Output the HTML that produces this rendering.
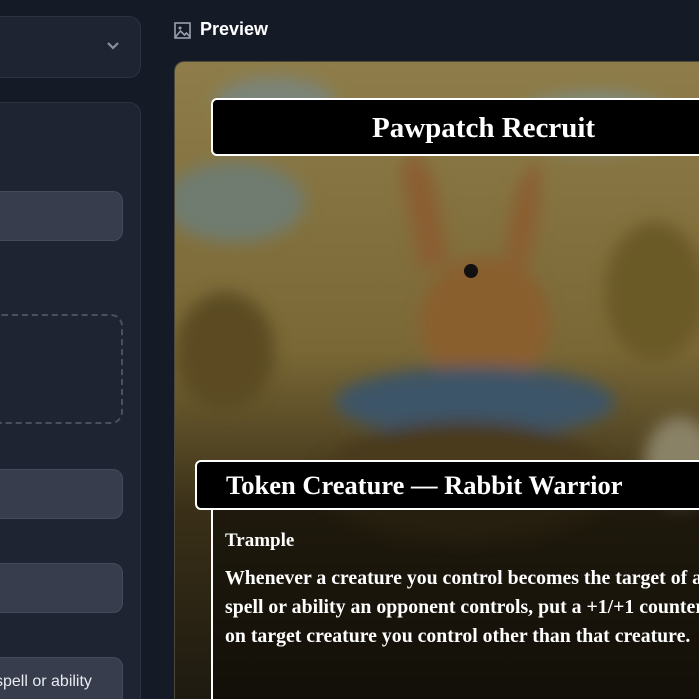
<!DOCTYPE html>
<html><head><style>
html,body{margin:0;width:699px;height:699px;overflow:hidden}
body{background:#151a27;position:relative;font-family:"Liberation Sans",sans-serif}
.p{position:absolute;background:#1f2433;border:1px solid #2c3242;border-radius:12px;box-sizing:border-box}
.in{position:absolute;left:-10px;width:133px;background:#383d4d;border:1px solid #454b5c;border-radius:10px;box-sizing:border-box}
.serif{font-family:"Liberation Serif",serif;font-weight:bold;color:#fff}
</style></head><body>
<div class="p" style="left:-20px;top:16px;width:161px;height:62px"></div>
<svg style="position:absolute;left:106px;top:41px" width="14" height="10"><path d="M2 2l5 5 5-5" stroke="#8a90a0" stroke-width="2.2" fill="none"/></svg>
<div class="p" style="left:-20px;top:102px;width:161px;height:597px;border-bottom:none;border-radius:12px 12px 0 0"></div>
<div class="in" style="top:191px;height:50px"></div>
<div style="position:absolute;left:-10px;top:314px;width:133px;height:110px;border:2px dashed #4a5060;border-radius:12px;box-sizing:border-box"></div>
<div class="in" style="top:469px;height:50px"></div>
<div class="in" style="top:563px;height:50px"></div>
<div class="in" style="top:657px;height:42px;border-bottom:none;border-radius:10px 10px 0 0;color:#e8eaf0;font-size:16px;padding-top:15px;white-space:nowrap;overflow:hidden"><span style="position:relative;left:4px">spell or ability</span></div>
<svg style="position:absolute;left:174px;top:22px" width="17" height="17" viewBox="0 0 17 17"><rect x="1" y="1" width="15" height="15" fill="none" stroke="#9aa0ae" stroke-width="1.6"/><circle cx="6" cy="6" r="1.5" fill="#9aa0ae"/><path d="M1.5 15l5-6 4 4 2-2 3.5 4" stroke="#9aa0ae" stroke-width="1.6" fill="none"/></svg>
<div style="position:absolute;left:200px;top:19px;color:#fff;font-weight:bold;font-size:18px">Preview</div>
<div style="position:absolute;left:174px;top:61px;width:525px;height:638px;overflow:hidden;border-radius:10px 0 0 0;border-left:1px solid #4a4a3a;border-top:1px solid #4a4a3a;box-sizing:border-box">
<svg width="525" height="638" style="position:absolute;left:0;top:0">
<defs><filter id="b"><feGaussianBlur stdDeviation="8"/></filter>
<linearGradient id="g" x1="0" y1="0" x2="0" y2="1"><stop offset="0" stop-color="#8e7d4a"/><stop offset=".45" stop-color="#7a6836"/><stop offset=".7" stop-color="#3a3018"/><stop offset="1" stop-color="#1e1a10"/></linearGradient></defs>
<rect width="525" height="638" fill="url(#g)"/>
<g filter="url(#b)">
<ellipse cx="60" cy="140" rx="70" ry="40" fill="#6f7c70"/>
<ellipse cx="420" cy="60" rx="80" ry="30" fill="#7f8a80"/>
<ellipse cx="100" cy="40" rx="60" ry="25" fill="#7a8478"/>
<ellipse cx="50" cy="290" rx="50" ry="60" fill="#5c4c22"/>
<ellipse cx="480" cy="230" rx="50" ry="70" fill="#6a5a28"/>
<path d="M225 110 Q240 70 260 120 L275 200 L245 210Z" fill="#8a5f30"/>
<path d="M330 200 Q335 110 365 100 Q370 150 350 210Z" fill="#8a5f30"/>
<ellipse cx="310" cy="260" rx="65" ry="65" fill="#8a5e2e"/>
<ellipse cx="300" cy="340" rx="140" ry="35" fill="#3e5468"/>
<ellipse cx="290" cy="420" rx="150" ry="60" fill="#4a3a1a"/>
<ellipse cx="505" cy="400" rx="35" ry="45" fill="#8a8266"/>
</g>
<circle cx="296" cy="209" r="7" fill="#111"/>
</svg>
<div class="serif" style="position:absolute;left:36px;top:36px;width:520px;height:58px;background:#000;border:2px solid #fff;border-radius:6px;box-sizing:border-box;font-size:29px;line-height:56px;padding-left:159px;white-space:nowrap">Pawpatch Recruit</div>
<div style="position:absolute;left:36px;top:446px;width:520px;height:200px;background:rgba(10,8,4,.55);border-left:2px solid #fff"></div>
<div class="serif" style="position:absolute;left:20px;top:398px;width:520px;height:50px;background:#000;border:2px solid #fff;border-radius:6px;box-sizing:border-box;font-size:26.5px;line-height:46px;padding-left:29px;white-space:nowrap">Token Creature — Rabbit Warrior</div>
<div class="serif" style="position:absolute;left:50px;top:468px;font-size:19px;white-space:nowrap">Trample</div>
<div class="serif" style="position:absolute;left:50px;top:502px;font-size:19.8px;line-height:29px;white-space:nowrap">Whenever a creature you control becomes the target of a<br>spell or ability an opponent controls, put a +1/+1 counter<br>on target creature you control other than that creature.</div>
</div>
</body></html>
